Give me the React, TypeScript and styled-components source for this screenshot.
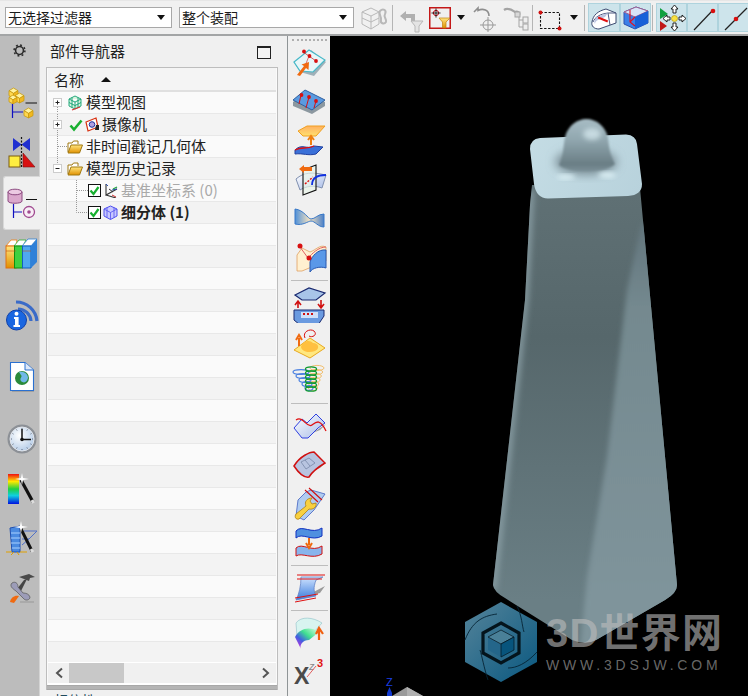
import React from "react";
import styled, { createGlobalStyle } from "styled-components";

const Global = createGlobalStyle`
  html, body { margin: 0; padding: 0; width: 748px; height: 696px; overflow: hidden; background: #f0f0f0; }
  body { font-family: "Noto Sans CJK SC", "Liberation Sans", sans-serif; color: #222; }
  * { box-sizing: border-box; }
`;

const Page = styled.div`width:748px;height:696px;display:flex;flex-direction:column;overflow:hidden;`;
const TopBar = styled.div`height:36px;flex:none;display:flex;align-items:center;padding:0 0 0 5px;background:#f0f0f0;border-top:1px solid #e6e6e6;border-bottom:2px solid #a3a5a6;`;
const Select = styled.div<{ $w: number; $ml?: number }>`
  width:${p => p.$w}px;height:21px;margin-left:${p => p.$ml ?? 0}px;flex:none;display:flex;align-items:center;justify-content:space-between;
  padding:0 6px 0 2px;background:#fff;border:1px solid #a8a8a8;font-size:14px;line-height:19px;color:#1c1c1c;
`;
const Caret = styled.span`width:0;height:0;border-left:4.5px solid transparent;border-right:4.5px solid transparent;border-top:5px solid #111;flex:none;`;
const BarSlot = styled.div<{ $w: number; $ml?: number }>`width:${p => p.$w}px;margin-left:${p => p.$ml ?? 0}px;height:30px;flex:none;display:flex;align-items:center;justify-content:center;`;
const BarSep = styled.div<{ $ml?: number }>`width:1px;height:26px;margin-left:${p => p.$ml ?? 0}px;background:#b5b5b5;flex:none;`;
const Pressed = styled.div<{ $w: number; $ml?: number }>`width:${p => p.$w}px;margin-left:${p => p.$ml ?? 0}px;height:29px;flex:none;display:flex;align-items:center;justify-content:center;background:#cde4eb;border:1px solid #aed3dd;`;
const Main = styled.div`flex:1;display:flex;min-height:0;`;
const Rail = styled.div`width:40px;flex:none;background:#bcbcbc;display:flex;flex-direction:column;border-right:1px solid #d4d4d4;`;
const RailSlot = styled.div<{ $mt?: number; $h?: number }>`height:${p => p.$h ?? 40}px;margin-top:${p => p.$mt ?? 0}px;flex:none;display:flex;align-items:center;justify-content:center;`;
const RailActive = styled.div`height:54px;width:37px;margin:6px 0 0 3px;flex:none;display:flex;align-items:center;justify-content:center;background:#f0f0f0;border:1px solid #d8d8d8;border-right:none;border-radius:3px 0 0 3px;`;
const Panel = styled.div`width:248px;flex:none;display:flex;flex-direction:column;background:#f0f0f0;border-right:1px solid #8f9496;`;
const PanelHead = styled.div`height:31px;flex:none;display:flex;align-items:center;justify-content:space-between;padding:2px 16px 0 10px;`;
const PanelTitle = styled.span`font-size:15px;line-height:20px;padding-bottom:3px;color:#222;`;
const MaxBox = styled.div`width:14px;height:13px;border:1px solid #222;border-top-width:2px;background:#f4f4f4;`;
const Tree = styled.div`margin:0 0 0 6px;width:232px;height:623px;flex:none;display:flex;flex-direction:column;border:1px solid #bdbdbd;border-bottom:none;background:#fafafa;padding:0 1px;overflow:hidden;`;
const TreeHeader = styled.div`height:24px;flex:none;display:flex;align-items:center;gap:16px;padding-left:6px;font-size:15px;background:#f4f4f4;border-bottom:2px solid #e0e0e0;`;
const SortArrow = styled.span`width:0;height:0;border-left:5.5px solid transparent;border-right:5.5px solid transparent;border-bottom:5px solid #111;margin-left:1px;`;
const Rows = styled.div`flex:1;min-height:0;overflow:hidden;display:flex;flex-direction:column;`;
const Row = styled.div<{ $alt: boolean }>`height:22px;flex:none;display:flex;align-items:center;background:${p => p.$alt ? "#f3f3f3" : "#fafafa"};border-bottom:1px solid #e8e8e8;`;
const RowLabel = styled.span<{ $dim?: boolean; $bold?: boolean; $ml?: number }>`
  margin-left:${p => p.$ml ?? 3}px;font-size:15px;line-height:20px;padding-bottom:2px;white-space:nowrap;
  color:${p => p.$dim ? "#a9a9a9" : "#222"};font-weight:${p => p.$bold ? 700 : 400};
`;
const ScrollBar = styled.div`height:21px;flex:none;display:flex;align-items:center;background:#f0f0f0;border-top:1px solid #fff;`;
const ScrollBtn = styled.div`width:21px;height:100%;flex:none;display:flex;align-items:center;justify-content:center;`;
const Thumb = styled.div`width:55px;height:100%;background:#c8c8c8;flex:none;`;
const ScrollFill = styled.div`flex:1;`;
const TreeEnd = styled.div`height:2px;flex:none;background:#fff;`;
const TreeBand = styled.div`height:5px;flex:none;margin:0 -1px;background:#b4b4b4;border-top:1px solid #a8a8a8;border-bottom:1px solid #a8a8a8;`;
const PanelFoot = styled.div`height:6px;flex:none;overflow:hidden;padding-left:14px;font-size:14px;line-height:20px;color:#1f4a5c;`;
const Tools = styled.div`width:42px;flex:none;display:flex;flex-direction:column;background:#f0f0f0;padding-left:1px;`;
const Grip = styled.div`height:6px;margin:3px 3px 1px 3px;flex:none;border-top:2px dotted #b0b0b0;`;
const ToolSlot = styled.div<{ $mt?: number }>`height:36px;margin-top:${p => p.$mt ?? 0}px;flex:none;display:flex;align-items:center;justify-content:center;`;
const ToolSep = styled.div<{ $mt?: number }>`height:1px;margin:${p => p.$mt ?? 0}px 2px 0 2px;flex:none;background:#bdbdbd;`;
const Viewport = styled.div`flex:1;position:relative;background:#000;overflow:hidden;`;
const Scene = styled.svg`display:block;width:418px;height:660px;`;
const Watermark = styled.div`position:absolute;left:216px;top:574px;display:flex;flex-direction:column;`;
const MarkTitle = styled.div`font-family:"Liberation Sans","Noto Sans CJK SC",sans-serif;font-weight:700;font-size:40px;line-height:46px;letter-spacing:1.2px;color:rgba(190,190,190,.6);white-space:nowrap;`;
const MarkSub = styled.div`font-family:"Liberation Sans",sans-serif;font-size:14px;line-height:14px;letter-spacing:3.8px;margin-top:2px;color:rgba(170,170,170,.62);white-space:nowrap;`;
const HiddenDefs = styled.svg`position:absolute;width:0;height:0;`;
const IconSvg = styled.svg`display:block;flex:none;`;

const Grad = () => (
  <HiddenDefs>
    <defs>
      <linearGradient id="gy" x1="0" y1="0" x2="1" y2="1"><stop offset="0" stopColor="#fff3a0" /><stop offset="1" stopColor="#e8a800" /></linearGradient>
      <linearGradient id="gb" x1="0" y1="0" x2="0" y2="1"><stop offset="0" stopColor="#cfe3ff" /><stop offset="1" stopColor="#3a7bdc" /></linearGradient>
      <linearGradient id="gbo" x1="0" y1="0" x2="1" y2="0"><stop offset="0" stopColor="#4f90d8" /><stop offset=".5" stopColor="#f4e2c0" /><stop offset="1" stopColor="#4a80c8" /></linearGradient>
      <linearGradient id="gs" x1="0" y1="0" x2="0" y2="1"><stop offset="0" stopColor="#f01010" /><stop offset=".25" stopColor="#ffe800" /><stop offset=".5" stopColor="#20d040" /><stop offset=".72" stopColor="#10d0e0" /><stop offset="1" stopColor="#0010e0" /></linearGradient>
      <linearGradient id="gr" x1="0" y1="1" x2="1" y2="0"><stop offset="0" stopColor="#ff20e0" /><stop offset=".35" stopColor="#4060e0" /><stop offset=".6" stopColor="#40e090" /><stop offset="1" stopColor="#e0ffe0" /></linearGradient>
      <linearGradient id="gw" x1="0" y1="0" x2="1" y2="1"><stop offset="0" stopColor="#fff" /><stop offset="1" stopColor="#a8bce8" /></linearGradient>
      <linearGradient id="gf" x1="0" y1="0" x2="0" y2="1"><stop offset="0" stopColor="#ffe680" /><stop offset="1" stopColor="#e09000" /></linearGradient>
      <radialGradient id="gc" cx=".4" cy=".35" r=".7"><stop offset="0" stopColor="#fff" /><stop offset="1" stopColor="#b4cce8" /></radialGradient>
      <linearGradient id="gg" x1="0" y1="0" x2="0" y2="1"><stop offset="0" stopColor="#ffb060" /><stop offset="1" stopColor="#ffe070" /></linearGradient>
    </defs>
  </HiddenDefs>
);

type V = { vb: string; w: number; h: number; children: React.ReactNode };
const Ico = ({ vb, w, h, children }: V) => <IconSvg width={w} height={h} viewBox={vb}>{children}</IconSvg>;

const Cube = ({ x, y, s }: { x: number; y: number; s: number }) => (
  <g stroke="#c89a10" strokeWidth=".8">
    <path d={`M${x},${y + s * .3} L${x + s * .5},${y} L${x + s},${y + s * .3} L${x + s * .5},${y + s * .6} Z`} fill="#fff3a0" />
    <path d={`M${x},${y + s * .3} L${x + s * .5},${y + s * .6} V${y + s * 1.1} L${x},${y + s * .85} Z`} fill="#ffd850" />
    <path d={`M${x + s},${y + s * .3} L${x + s * .5},${y + s * .6} V${y + s * 1.1} L${x + s},${y + s * .85} Z`} fill="#f2b820" />
  </g>
);

/* ---- left rail ---- */
const RailGear = () => (
  <Ico vb="0 0 16 16" w={15} h={15}>
    <circle cx="8" cy="8" r="4.2" fill="none" stroke="#2a2a2a" strokeWidth="1.7" />
    <circle cx="8" cy="8" r="5.8" fill="none" stroke="#2a2a2a" strokeWidth="1.6" strokeDasharray="2 2.55" />
  </Ico>
);
const RailAssembly = () => (
  <Ico vb="0 82 40 40" w={40} h={40}>
    <Cube x={9} y={88} s={9} /><Cube x={15} y={93} s={9} /><Cube x={9} y={95} s={8} />
    <path d="M25.5,103H37" stroke="#111" strokeWidth="1" />
    <path d="M12.5,104V118M12.5,112H23" stroke="#1010c0" strokeWidth="1.2" fill="none" />
    <Cube x={24} y={108} s={9} />
  </Ico>
);
const RailConstraint = () => (
  <Ico vb="0 130 40 40" w={40} h={40}>
    <path d="M13,138L30,151V138L13,151Z" fill="#1f2fd0" />
    <rect x="9" y="156" width="11" height="11" fill="#ffee40" stroke="#7a5a10" />
    <path d="M23,153V167H35Z" fill="#d81010" stroke="#801010" strokeWidth=".6" />
    <path d="M21.5,137V168" stroke="#111" strokeWidth="1.2" strokeDasharray="2 1.5" />
  </Ico>
);
const RailPart = () => (
  <Ico vb="3 183 37 40" w={37} h={40}>
    <path d="M7,192V201C7,204 21,204 21,201V192Z" fill="#dba8cc" stroke="#8c4a80" />
    <ellipse cx="14" cy="192" rx="7" ry="2.8" fill="#eccae2" stroke="#8c4a80" />
    <path d="M25,199.5H36" stroke="#111" strokeWidth="1" />
    <path d="M12.5,204V218M12.5,212H21" stroke="#1010c0" strokeWidth="1.2" fill="none" />
    <circle cx="28" cy="212" r="5.5" fill="#f8eef6" stroke="#a04a90" strokeWidth="1.3" />
    <circle cx="28" cy="212" r="1.8" fill="#a04a90" />
  </Ico>
);
const RailBooks = () => (
  <Ico vb="0 234 40 40" w={40} h={40}>
    <path d="M6,246L11,240H17L16,246Z" fill="#fff" stroke="#f08010" strokeWidth=".8" />
    <rect x="6" y="246" width="10" height="22" fill="url(#gf)" stroke="#e07010" />
    <path d="M14,246L19,240H26L23,246Z" fill="#fff" stroke="#30b030" strokeWidth=".8" />
    <rect x="14.5" y="246" width="8" height="22" fill="#40d040" stroke="#109010" />
    <path d="M22,246L28,239H37L31,246Z" fill="#fff" stroke="#3080d0" strokeWidth=".8" />
    <path d="M22.5,246H31V268H22.5Z" fill="#50a8f0" stroke="#1060c0" />
    <path d="M31,246L37,239V262L31,268Z" fill="#2f80d8" />
    <path d="M6,251H16M22.5,251H31" stroke="#c05010" strokeWidth=".6" />
  </Ico>
);
const RailInfo = () => (
  <Ico vb="0 297 40 40" w={40} h={40}>
    <path d="M16,302A21,21 0 0 1 37,321" fill="none" stroke="#3a6bc8" strokeWidth="3.2" />
    <path d="M18,309A13,13 0 0 1 31,321" fill="none" stroke="#3a6bc8" strokeWidth="3.2" />
    <circle cx="16.5" cy="320" r="10" fill="#1a66e0" stroke="#1040a8" />
    <circle cx="16.5" cy="313.8" r="2" fill="#fff" />
    <path d="M14,317H18.6V325H20V327H13.5V325H15V319H14Z" fill="#fff" />
  </Ico>
);
const RailDoc = () => (
  <Ico vb="0 357 40 40" w={40} h={40}>
    <path d="M12,364H25L34,372V392H12Z" fill="#a0a0a0" />
    <path d="M10.5,362.5H25L33.5,370V390.5H10.5Z" fill="#fff" stroke="#2a70d0" strokeWidth="1.1" />
    <path d="M25,362.5V370H33.5" fill="#dde8f8" stroke="#2a70d0" />
    <circle cx="22" cy="378" r="7" fill="#2a8a3a" />
    <path d="M19,372C24,371 28,374 28,378C27,382 24,384 21,381C19,378 23,377 21,375Z" fill="#70b8e8" />
  </Ico>
);
const RailClock = () => (
  <Ico vb="0 419 40 40" w={40} h={40}>
    <circle cx="22" cy="439" r="14.5" fill="#8c9096" />
    <circle cx="22" cy="439" r="12" fill="url(#gc)" stroke="#e0e4ea" />
    <path d="M22,429V439.5H31" stroke="#111" strokeWidth="1.5" fill="none" />
    <circle cx="22" cy="439.5" r="1.8" fill="#111" />
    <path d="M22,428v1M33,439h-1M22,450v-1M11,439h1M27.5,429.5l-.6,1M31.5,433.5l-1,.6M31.5,444.5l-1,-.6M27.5,448.5l-.6,-1M16.5,448.5l.6,-1M12.5,444.5l1,-.6M12.5,433.5l1,.6M16.5,429.5l.6,1" stroke="#4a5060" strokeWidth=".8" />
  </Ico>
);
const Sparkle = ({ x, y }: { x: number; y: number }) => (
  <path d={`M${x - 7},${y}L${x - 1},${y - 1}L${x},${y - 6}L${x + 1},${y - 1}L${x + 7},${y}L${x + 1},${y + 1}L${x},${y + 6}L${x - 1},${y + 1}Z`} fill="#fff" />
);
const RailSpectrum = () => (
  <Ico vb="0 468 40 40" w={40} h={40}>
    <rect x="8" y="474" width="11" height="30" fill="url(#gs)" />
    <path d="M21,480L33,502" stroke="#111" strokeWidth="3.2" />
    <path d="M32,500L33.5,503" stroke="#ddd" strokeWidth="3" />
    <Sparkle x={22} y={479} />
  </Ico>
);
const RailWand = () => (
  <Ico vb="0 520 40 40" w={40} h={40}>
    <path d="M10,528L20,526V552H12Z" fill="#4a8ae0" stroke="#2050b0" />
    <path d="M11,533H20M11,538H20M11,543H20M12,548H20" stroke="#a8d0ff" />
    <path d="M24,531H37L29,539H22M22,545L29,539" stroke="#5070c8" fill="none" />
    <path d="M6,552H12M20,552H27M11,555L14,552M19,555L17,552" stroke="#e0a000" />
    <path d="M21,529L32,551" stroke="#111" strokeWidth="3" />
    <path d="M31,549L33,552" stroke="#ddd" strokeWidth="3" />
    <Sparkle x={21} y={527} />
  </Ico>
);
const RailTools = () => (
  <Ico vb="0 568 40 40" w={40} h={40}>
    <path d="M19,577L29,574L35,577L30,578L29,581Z" fill="#4a4a4a" />
    <path d="M24,580L27,579L21,591L17,589Z" fill="#444" />
    <path d="M12,583C9,586 13,589 16,591L24,599C26,601 30,600 30,597C29,594 26,593 23,593L18,587C18,583 15,581 12,583Z" fill="#9c9cb8" stroke="#555" strokeWidth=".7" />
    <path d="M10,602C11,597 15,595 19,596L14,603Z" fill="#f06a10" />
    <path d="M20,602H34" stroke="#aaa" strokeWidth="2" />
  </Ico>
);

/* ---- vertical toolbar ---- */
const T = ({ c, children }: { c: number; children: React.ReactNode }) => <Ico vb={`290 ${c - 18} 40 36`} w={40} h={36}>{children}</Ico>;
const ToolCurve = () => (
  <T c={64}>
    <path d="M295,64L311,50L326,62L314,76L300,72Z" fill="#9fb0b8" />
    <path d="M294,62L309,50L325,60L313,72L300,71Z" fill="#e8f6f8" stroke="#46b8c8" strokeWidth="1.2" />
    <path d="M303,52L309,56L316,61M309,56L305,66" stroke="#d01010" strokeWidth=".6" />
    <circle cx="304" cy="51.5" r="1.9" fill="#d81010" /><circle cx="309.5" cy="56" r="1.9" fill="#d81010" /><circle cx="316" cy="61" r="1.9" fill="#d81010" />
    <path d="M297,75L304,66L301.5,64.5L309,62L308.5,70L306,68L300,76Z" fill="#f06a10" />
  </T>
);
const ToolPlate = () => (
  <T c={100}>
    <path d="M293,102L305,92L325,102V106L312,114L293,106Z" fill="#8c98a0" />
    <path d="M293,100L305,90L325,100L312,110Z" fill="#5a9ae0" stroke="#3060a0" />
    <path d="M301,95L299,104M309,97L306,108M316,101L314,108" stroke="#d81010" />
    <circle cx="301.5" cy="95" r="1.9" fill="#d81010" /><circle cx="309" cy="97" r="1.9" fill="#d81010" /><circle cx="316" cy="101" r="1.9" fill="#d81010" />
  </T>
);
const ToolOffset = () => (
  <T c={141}>
    <path d="M298,131L307,126H325L316,136H303Z" fill="url(#gg)" stroke="#f0a020" />
    <path d="M311,137V145M308,140L311,136L314,140" stroke="#f08010" strokeWidth="2" fill="none" />
    <path d="M295,150C302,143 306,150 314,146L323,147L316,154C308,156 303,153 295,154Z" fill="#3a70d8" stroke="#2040a0" />
    <path d="M295,150C302,146 306,150 314,146" stroke="#e01010" strokeWidth="1.3" fill="none" />
  </T>
);
const ToolSection = () => (
  <T c={180}>
    <path d="M296,179C304,172 312,172 326,175L322,188C314,185 306,186 300,190Z" fill="url(#gw)" stroke="#8090b0" />
    <path d="M303,170L316,165V190L303,195Z" fill="#e8f4e8" fillOpacity=".7" stroke="#111" strokeWidth="1.1" />
    <path d="M312,185C312,178 318,175 326,175" stroke="#1030e0" strokeWidth="1.8" fill="none" />
    <path d="M305,184L313,177" stroke="#e01010" strokeWidth="1.5" strokeDasharray="2 1.4" />
    <path d="M299,169L304,165V167H312V171H304V173Z" fill="#f06a10" />
  </T>
);
const ToolBow = () => (
  <T c={217}>
    <path d="M295,209C304,210 308,219 311,219C315,219 318,214 324,214V227C318,227 315,221 311,221C308,221 303,226 295,224Z" fill="url(#gbo)" stroke="#3878c8" />
  </T>
);
const ToolSweep = () => (
  <T c={258}>
    <path d="M297,255L302,248L310,252C316,250 320,244 326,247V261L302,271H297Z" fill="#fff0d0" stroke="#e0a060" strokeWidth=".8" />
    <path d="M310,262C312,256 318,249 326,250V268C320,266 312,268 310,272Z" fill="#5a98e8" stroke="#2858b0" />
    <path d="M300,247L308,258C312,254 318,247 326,247" stroke="#e06060" fill="none" />
    <circle cx="300" cy="246" r="2.5" fill="#d81010" /><circle cx="309" cy="258" r="2.5" fill="#d81010" />
  </T>
);
const ToolMold = () => (
  <T c={305}>
    <path d="M295,295L309,288L325,293L316,300H302Z" fill="#a8c4e8" stroke="#1a2a70" strokeWidth="1.2" />
    <path d="M294,310H324V316L318,325H300L294,320Z" fill="#6a9ae0" stroke="#1a2a70" />
    <path d="M301,312H318V318H301Z" fill="#cfe0f8" />
    <path d="M298,308V302M295,305L298,301L301,305M321,300V307M318,304L321,308L324,304" stroke="#d01010" strokeWidth="1.6" fill="none" />
    <path d="M303,313h2v2h-2zM307,313h2v2h-2zM311,313h2v2h-2z" fill="#d01010" />
  </T>
);
const ToolBlob = () => (
  <T c={343}>
    <path d="M294,350L310,338L325,348L310,358Z" fill="#ffe880" stroke="#e8a820" />
    <path d="M301,347C302,341 310,339 313,343C319,343 320,349 315,351C309,353 302,352 301,347Z" fill="#ffc040" />
    <path d="M305,338C302,332 310,328 314,331C318,335 312,338 309,336" stroke="#d81010" fill="none" />
    <path d="M299,346V338M296,340L299,335L302,340" stroke="#f06a10" strokeWidth="2" fill="none" />
  </T>
);
const ToolCoil = () => (
  <T c={381}>
    {[0, 1, 2, 3, 4, 5].map(i => <ellipse key={i} cx={317 - i * .8} cy={368 + i * 4} rx={7 - i * .5} ry={2.6} fill="none" stroke="#f0c070" />)}
    {[0, 1, 2, 3, 4].map(i => <ellipse key={i} cx={301 + i * 2} cy={372 + i * 4} rx={8 - i} ry={2.4} fill="none" stroke="#4a80e0" strokeWidth="1.2" />)}
    {[0, 1, 2, 3, 4, 5].map(i => <ellipse key={i} cx={311} cy={369 + i * 4} rx={5.5} ry={2.2} fill="none" stroke="#109a30" strokeWidth="1.3" />)}
  </T>
);
const ToolFold = () => (
  <T c={427}>
    <path d="M300,438L320,430L326,424L308,436Z" fill="#9a9a9a" />
    <path d="M294,428L302,419L307,423L316,414L325,423L318,428L308,438L302,438Z" fill="url(#gw)" stroke="#3040e0" />
    <path d="M296,420C303,415 307,429 312,425C316,422 320,418 326,431" stroke="#e01010" strokeWidth="1.3" fill="none" />
  </T>
);
const ToolPatch = () => (
  <T c={465}>
    <path d="M300,476L320,468L326,462L308,474Z" fill="#9a9a9a" />
    <path d="M294,466C300,456 310,452 314,452L325,463C320,466 312,472 309,477C304,478 298,472 294,466Z" fill="#b8c4e0" stroke="#d01010" strokeWidth="1.5" />
    <path d="M301,462L309,458L315,463L306,469ZM305,460L310,466" stroke="#7080a0" strokeWidth=".7" fill="none" />
  </T>
);
const ToolWrench = () => (
  <T c={505}>
    <path d="M298,500L306,492L311,490L325,494L314,510L304,520L296,516Z" fill="#b0ccf0" stroke="#4060c0" strokeWidth=".8" />
    <path d="M305,490L318,502M309,488L322,500" stroke="#d01010" strokeWidth="1.1" />
    <path d="M296,514L306,506C304,502 307,498 312,498L310,501L312,504L316,503C317,507 313,510 309,509L299,519C296,520 294,517 296,514Z" fill="#f8d040" stroke="#b08010" strokeWidth=".8" />
  </T>
);
const ToolBlend = () => (
  <T c={543}>
    <path d="M296,531C302,524 312,535 322,528V536C312,542 302,532 296,538Z" fill="#5090e0" stroke="#1030c0" />
    <path d="M296,548C302,542 312,553 322,546V554C312,560 302,552 296,556Z" fill="#88b4ec" stroke="#d01010" />
    <path d="M309,538V545M306,543L309,548L312,543" stroke="#f06a10" strokeWidth="2" fill="none" />
  </T>
);
const ToolRuled = () => (
  <T c={588}>
    <path d="M300,598L320,593L325,586L306,596Z" fill="#9a9a9a" />
    <path d="M301,577L323,577L316,580C313,588 314,592 316,596L296,600C299,594 301,586 301,577Z" fill="url(#gb)" stroke="#5878c0" strokeWidth=".7" />
    <path d="M297,575L325,575M297,579L322,579M295,598L318,594M295,602L316,598" stroke="#e01010" />
  </T>
);
const ToolColor = () => (
  <T c={632}>
    <path d="M296,623C301,616 313,617 322,623L314,632C308,628 303,630 297,637Z" fill="#d8f4f0" stroke="#90c0c8" strokeWidth=".6" />
    <path d="M295,637C300,628 310,626 319,632L309,640C303,640 299,645 301,649Z" fill="url(#gr)" />
    <path d="M319,640V630M316,634L319,628L323,634" stroke="#f06010" strokeWidth="2.2" fill="none" />
  </T>
);
const ToolExpr = () => (
  <T c={672}>
    <text x="294" y="684" fontFamily="Liberation Sans" fontWeight="700" fontSize="23" fill="#4a4a4a">X</text>
    <text x="309" y="670" fontFamily="Liberation Sans" fontStyle="italic" fontSize="11" fill="#888">z</text>
    <text x="317" y="667" fontFamily="Liberation Sans" fontWeight="700" fontSize="11" fill="#e01010">3</text>
    <path d="M307,677L316,666" stroke="#e06060" />
  </T>
);

/* ---- top bar icons ---- */
const GRAY = "#b8b8b8";
const BarAssembly = () => (
  <Ico vb="0 0 36 30" w={36} h={30}>
    <path d="M6,9L15,5L23,9V21L15,26L6,21Z M6,9L15,13L23,9M15,13V26M6,15L15,19L23,15" fill="#f0f0f0" stroke={GRAY} />
    <path d="M24,8C27,5 31,7 29,11C27,14 31,16 30,19C28,22 24,20 25,17C26,14 22,11 24,8Z" fill="none" stroke={GRAY} strokeWidth="2" />
  </Ico>
);
const BarUndoFilter = () => (
  <Ico vb="0 0 36 30" w={36} h={30}>
    <path d="M7,13L13,8V11H22V19H18V15H13V18Z" fill="#b0b0b0" />
    <path d="M18,18H30L26,23V29H22V23Z" fill="#e4e4e4" stroke={GRAY} />
  </Ico>
);
const BarFilter = () => (
  <Ico vb="0 0 22 22" w={22} h={22}>
    <rect x=".75" y=".75" width="20.5" height="20.5" fill="none" stroke="#c41818" strokeWidth="1.5" />
    <path d="M10,11H21L17,15V21H13.5V15Z" fill="url(#gf)" stroke="#c08010" strokeWidth=".7" />
    <circle cx="7" cy="6" r="2.6" fill="none" stroke="#c00010" />
    <path d="M7,1.5V10.5M2.5,6H11.5" stroke="#111" strokeWidth=".9" />
  </Ico>
);
const BarUndoTarget = () => (
  <Ico vb="0 0 30 30" w={30} h={30}>
    <path d="M3,9L7,5V7.5C12,5 18,7 18,13" fill="none" stroke="#8e8e8e" strokeWidth="1.6" />
    <circle cx="17" cy="22" r="5" fill="none" stroke="#999" />
    <path d="M17,14V29M9,22H25" stroke="#999" />
  </Ico>
);
const BarTree = () => (
  <Ico vb="0 0 32 30" w={32} h={30}>
    <path d="M4,7C8,4 12,7 15,9C18,8 20,10 19,12" fill="none" stroke="#a4a4a4" strokeWidth="2.2" />
    <path d="M19,13V24M19,17H23M19,24H23" stroke="#a4a4a4" fill="none" />
    <rect x="15" y="9" width="5" height="5" fill="#d8d8d8" stroke="#a4a4a4" />
    <rect x="23" y="14" width="5" height="6" fill="#eee" stroke="#a4a4a4" />
    <rect x="23" y="21" width="5" height="6" fill="#eee" stroke="#a4a4a4" />
  </Ico>
);
const BarBox = () => (
  <Ico vb="0 0 36 30" w={36} h={30}>
    <rect x="7.5" y="9.5" width="19" height="16" fill="none" stroke="#111" strokeWidth="1.1" strokeDasharray="2.4 1.6" />
    <circle cx="7.5" cy="9.5" r="2" fill="#d01010" /><circle cx="26.5" cy="25.5" r="2" fill="#d01010" />
  </Ico>
);
const BarCurveSolid = () => (
  <Ico vb="0 0 30 27" w={30} h={27}>
    <path d="M3,18C4,11 9,7 17,5L27,9V19L10,25C5,25 2,22 3,18Z" fill="#fff" stroke="#3c4a70" />
    <path d="M4,18C6,13 11,10 19,9L27,9M19,9L21,21" fill="none" stroke="#4a5880" />
    <path d="M6,20C4,17 7,13 10,12L19,9L16,13L9,16C7,17 6,18 6,20Z" fill="#bcc4e0" />
    <path d="M9,14L19,17" stroke="#e01010" strokeWidth="2" transform="rotate(6 14 15)" />
  </Ico>
);
const BarSolid = () => (
  <Ico vb="0 0 30 27" w={30} h={27}>
    <path d="M3,8L15,3L27,7V19L14,25L3,20Z" fill="#3a80e8" stroke="#2a50b0" />
    <path d="M3,8L15,3L27,7L14,13Z" fill="#d8e4f8" stroke="#a06090" />
    <path d="M14,13V25L27,19V7Z" fill="#1860d8" />
    <path d="M9,6V18L14,22M14,13L9,18" stroke="#e01020" strokeWidth="1.1" fill="none" />
  </Ico>
);
const BarPlay = () => (
  <Ico vb="0 0 30 27" w={30} h={27}>
    <path d="M3,4L11,10L3,15Z" fill="#10a040" /><path d="M3,17L10,22L3,27Z" fill="#c01818" />
    <circle cx="17.5" cy="14.5" r="3" fill="#f8e040" stroke="#b09000" strokeWidth=".6" />
    <path d="M17.5,1L21,5H19V9H16V5H14ZM17.5,27L21,23H19V19H16V23H14ZM6,14.5L10,11V13H13V16H10V18ZM29,14.5L25,11V13H22V16H25V18Z" fill="#fff" stroke="#111" strokeWidth=".9" />
  </Ico>
);
const BarLine = ({ mid }: { mid?: boolean }) => (
  <Ico vb="0 0 30 27" w={30} h={27}>
    <path d={mid ? "M6,26L28,4" : "M6,26L25,6"} stroke="#222" strokeWidth="1.2" />
    <circle cx={mid ? 17 : 25} cy={mid ? 15 : 7} r="2.3" fill="#d81010" />
  </Ico>
);

/* ---- tree icons ---- */
const Dot = "#999";
type GK = "first" | "mid" | "leaf" | "last" | "child" | "childLast";
const Gutter = ({ kind }: { kind: GK }) => {
  const box = kind === "first" || kind === "mid" || kind === "last";
  const w = kind === "child" || kind === "childLast" ? 40 : 19;
  return (
    <IconSvg width={w} height={21}>
      <g stroke={Dot} strokeDasharray="1 1" fill="none">
        {(kind === "first" || kind === "mid" || kind === "leaf") && <path d={`M9.5,${kind === "first" ? 11 : 0}V21`} />}
        {(kind === "mid" || kind === "leaf" || kind === "last") && <path d="M9.5,0V11" />}
        {kind === "leaf" && <path d="M10,10.5H19" />}
        {kind === "child" && <path d="M28.5,0V21M29,10.5H40" />}
        {kind === "childLast" && <path d="M28.5,0V10.5H40" />}
      </g>
      {box && (
        <g>
          <rect x="5.5" y="6.5" width="8" height="8" fill="#fff" stroke="#ccc" />
          <path d={kind === "last" ? "M7.5,10.5H11.5" : "M7.5,10.5H11.5M9.5,8.5V12.5"} stroke="#222" />
        </g>
      )}
    </IconSvg>
  );
};
const TreeViews = () => (
  <Ico vb="0 0 16 16" w={16} h={16}>
    <path d="M8,1L14,4V11L8,14L2,11V4Z M2,4L8,7L14,4M8,7V14M5,2.5V12.5M11,2.5V12.5M2,7.5L8,10.5L14,7.5" fill="#d8f4e0" stroke="#10a070" strokeWidth=".9" />
    <path d="M5,15L13,12" stroke="#e03030" strokeWidth="1.2" />
  </Ico>
);
const GreenCheck = () => (
  <Ico vb="-2 0 17 14" w={17} h={14}>
    <path d="M1.5,7.5L5,11.5L12.5,2.5" fill="none" stroke="#18b030" strokeWidth="2.6" />
  </Ico>
);
const TreeCam = () => (
  <Ico vb="0 0 16 16" w={16} h={16}>
    <path d="M2,5L12,1L14,10L4,14Z" fill="#fff" stroke="#d83010" strokeWidth="1.2" />
    <circle cx="8" cy="7.5" r="2.8" fill="#b0a0e0" stroke="#2030a0" />
    <path d="M12,8H15V13H11Z" fill="#222" />
  </Ico>
);
const Folder = () => (
  <Ico vb="0 0 16 14" w={16} h={14}>
    <path d="M1,12V3H5L6.5,1H11V4" fill="#fff" stroke="#a07810" />
    <path d="M1,13L4,5H15.5L12.5,13Z" fill="url(#gf)" stroke="#a07810" />
  </Ico>
);
const Checkbox = () => (
  <Ico vb="0 0 13 13" w={13} h={13}>
    <rect x=".5" y=".5" width="12" height="12" fill="#fff" stroke="#111" />
    <path d="M2.5,6.5L5.5,10L10.5,3" fill="none" stroke="#18b030" strokeWidth="2.2" />
  </Ico>
);
const TreeCsys = () => (
  <Ico vb="-2 0 17 15" w={17} h={15}>
    <path d="M3,1V12L14,6M3,12L13,15" fill="none" stroke="#333" strokeWidth="1.1" />
    <path d="M6,6L10,9" stroke="#333" />
    <path d="M3,1L5,3M9,7L14,6" stroke="#2a50b0" />
    <path d="M9,12L13,14" stroke="#d03030" />
    <path d="M10,6L14,4" stroke="#20a040" strokeWidth="1.3" />
  </Ico>
);
const TreeBody = () => (
  <Ico vb="-2 0 17 15" w={17} h={15}>
    <path d="M7.5,1L14,4V11L7.5,14.5L1,11V4Z" fill="#c8c8ff" stroke="#5050f0" />
    <path d="M1,4L7.5,7.5L14,4M7.5,7.5V14.5M4,2.5V12.5M11,2.5V12.5" fill="none" stroke="#5050f0" strokeWidth=".8" />
  </Ico>
);
const Chevron = ({ right }: { right?: boolean }) => (
  <Ico vb="0 0 10 12" w={10} h={12}>
    <path d={right ? "M2,1.5L7,6L2,10.5" : "M8,1.5L3,6L8,10.5"} fill="none" stroke="#555" strokeWidth="2" />
  </Ico>
);

/* ---- 3D model ---- */
const Model = () => (
  <Scene viewBox="330 36 418 660">
    <defs>
      <linearGradient id="mb" gradientUnits="userSpaceOnUse" x1="0" y1="195" x2="0" y2="600"><stop offset="0" stopColor="#5f7074" /><stop offset=".35" stopColor="#56676b" /><stop offset="1" stopColor="#6a7f85" /></linearGradient>
      <linearGradient id="mr" gradientUnits="userSpaceOnUse" x1="0" y1="210" x2="0" y2="600"><stop offset="0" stopColor="#60727a" /><stop offset=".25" stopColor="#74898f" /><stop offset="1" stopColor="#7f949b" /></linearGradient>
      <linearGradient id="mk" gradientUnits="userSpaceOnUse" x1="0" y1="119" x2="0" y2="172"><stop offset="0" stopColor="#a8bdc5" /><stop offset=".4" stopColor="#90a6ae" /><stop offset=".85" stopColor="#6a7e85" /><stop offset="1" stopColor="#7c9199" /></linearGradient>
      <linearGradient id="mp" gradientUnits="userSpaceOnUse" x1="530" y1="140" x2="640" y2="195"><stop offset="0" stopColor="#c4dce4" /><stop offset="1" stopColor="#b8d2dc" /></linearGradient>
      <filter id="b1" x="-20%" y="-20%" width="140%" height="140%"><feGaussianBlur stdDeviation="1.2" /></filter>
      <filter id="b2" x="-30%" y="-30%" width="160%" height="160%"><feGaussianBlur stdDeviation="2.5" /></filter>
      <filter id="b3" x="-30%" y="-30%" width="160%" height="160%"><feGaussianBlur stdDeviation="3" /></filter>
      <filter id="b5" x="-30%" y="-30%" width="160%" height="160%"><feGaussianBlur stdDeviation="5" /></filter>
      <clipPath id="cb"><path d="M532,185L530,205L525,300L493,585Q494,592 505,598L572,640Q585,645 596,640L665,600Q677,593 677,585L640,188Z" /></clipPath>
      <clipPath id="cp"><path d="M540,138Q530,139 530,149L534,184Q536,198 548,198.5L628,196Q642,195 642,184L637,144Q636,135 626,134.5Z" /></clipPath>
      <linearGradient id="hx1" x1="0" y1="0" x2="1" y2="1"><stop offset="0" stopColor="#55849a" /><stop offset="1" stopColor="#0a5880" /></linearGradient>
    </defs>
    <g clipPath="url(#cb)">
      <rect x="480" y="180" width="210" height="470" fill="url(#mb)" />
      <path d="M531,190L525,300L493,590" stroke="#8a9fa5" strokeWidth="6" filter="url(#b3)" fill="none" />
      <path d="M641,225L627,290L607,457L587,577L580,650H690V200Z" fill="url(#mr)" filter="url(#b2)" />
    </g>
    <g clipPath="url(#cp)">
      <rect x="525" y="130" width="120" height="72" fill="url(#mp)" />
      <ellipse cx="586" cy="162" rx="31" ry="13" fill="#7b8f97" filter="url(#b5)" />
      <ellipse cx="566" cy="177" rx="9" ry="2.5" fill="#dcf0f5" filter="url(#b2)" />
      <ellipse cx="607" cy="175" rx="9" ry="3" fill="#dcf0f5" filter="url(#b2)" />
    </g>
    <path d="M559,165C564,156 563,146 565,137C568,125 578,119 586,119C597,119 606,127 608,138C609,147 610,156 615,164C605,173 570,174 559,165Z" fill="url(#mk)" filter="url(#b1)" />
    <ellipse cx="592" cy="134" rx="9" ry="6" fill="#cfe2e8" filter="url(#b2)" opacity=".85" />
    <path d="M392,696L407,687L423,696Z" fill="#9a9a9a" />
    <path d="M407,687L423,696H407Z" fill="#b0b0b0" />
    <text x="386" y="686" fontFamily="Liberation Sans" fontSize="11" fill="#1a3fe8">Z</text>
    <path d="M389.5,687L392,693V697H387V693Z" fill="#1038d0" />
    <g>
      <path d="M501,602L537,622V662L501,682L465,662V622Z" fill="url(#hx1)" />
      <path d="M465,640C472,622 482,616 497,614M517,606C522,616 522,626 524,632M537,652C526,664 516,668 508,668M488,680C484,668 482,656 480,650" fill="none" stroke="#062434" strokeWidth=".9" />
      <path d="M501,623L519,633V653L501,663L483,653V633Z" fill="none" stroke="#04141c" strokeWidth="3.2" />
      <path d="M501,630L514,637V650L501,657L488,650V637Z" fill="#24668a" />
      <path d="M501,630L514,637L501,644L488,637Z" fill="#4a8098" stroke="#04141c" strokeWidth=".7" />
      <path d="M501,644V657L514,650V637Z" fill="#07547c" stroke="#04141c" strokeWidth=".7" />
    </g>
  </Scene>
);

const App = () => (
  <Page>
    <Global />
    <Grad />
    <TopBar>
      <Select $w={167}>无选择过滤器<Caret /></Select>
      <Select $w={175} $ml={7}>整个装配<Caret /></Select>
      <BarSlot $w={36} $ml={2}><BarAssembly /></BarSlot>
      <BarSep />
      <BarSlot $w={36}><BarUndoFilter /></BarSlot>
      <BarFilter />
      <BarSlot $w={20}><Caret /></BarSlot>
      <BarSlot $w={29}><BarUndoTarget /></BarSlot>
      <BarSlot $w={32}><BarTree /></BarSlot>
      <BarSep />
      <BarSlot $w={36}><BarBox /></BarSlot>
      <BarSlot $w={10}><Caret /></BarSlot>
      <BarSep $ml={5} />
      <Pressed $w={32} $ml={3}><BarCurveSolid /></Pressed>
      <Pressed $w={31}><BarSolid /></Pressed>
      <BarSep $ml={1} />
      <Pressed $w={31} $ml={3}><BarPlay /></Pressed>
      <Pressed $w={31}><BarLine /></Pressed>
      <Pressed $w={31}><BarLine mid /></Pressed>
    </TopBar>
    <Main>
      <Rail>
        <RailSlot $h={28}><RailGear /></RailSlot>
        <RailSlot $mt={18}><RailAssembly /></RailSlot>
        <RailSlot $mt={8}><RailConstraint /></RailSlot>
        <RailActive><RailPart /></RailActive>
        <RailSlot $mt={4}><RailBooks /></RailSlot>
        <RailSlot $mt={23}><RailInfo /></RailSlot>
        <RailSlot $mt={20}><RailDoc /></RailSlot>
        <RailSlot $mt={22}><RailClock /></RailSlot>
        <RailSlot $mt={9}><RailSpectrum /></RailSlot>
        <RailSlot $mt={12}><RailWand /></RailSlot>
        <RailSlot $mt={8}><RailTools /></RailSlot>
      </Rail>
      <Panel>
        <PanelHead><PanelTitle>部件导航器</PanelTitle><MaxBox /></PanelHead>
        <Tree>
          <TreeHeader>名称<SortArrow /></TreeHeader>
          <Rows>
            <Row $alt={false}><Gutter kind="first" /><TreeViews /><RowLabel>模型视图</RowLabel></Row>
            <Row $alt><Gutter kind="mid" /><GreenCheck /><TreeCam /><RowLabel $ml={2}>摄像机</RowLabel></Row>
            <Row $alt={false}><Gutter kind="leaf" /><Folder /><RowLabel>非时间戳记几何体</RowLabel></Row>
            <Row $alt><Gutter kind="last" /><Folder /><RowLabel>模型历史记录</RowLabel></Row>
            <Row $alt={false}><Gutter kind="child" /><Checkbox /><TreeCsys /><RowLabel $dim>基准坐标系 (0)</RowLabel></Row>
            <Row $alt><Gutter kind="childLast" /><Checkbox /><TreeBody /><RowLabel $bold>细分体 (1)</RowLabel></Row>
            {Array.from({ length: 21 }, (_, i) => <Row key={i} $alt={i % 2 === 1} />)}
          </Rows>
          <ScrollBar>
            <ScrollBtn><Chevron /></ScrollBtn>
            <Thumb />
            <ScrollFill />
            <ScrollBtn><Chevron right /></ScrollBtn>
          </ScrollBar>
          <TreeEnd />
          <TreeBand />
        </Tree>
        <PanelFoot>相依性</PanelFoot>
      </Panel>
      <Tools>
        <Grip />
        <ToolSlot><ToolCurve /></ToolSlot>
        <ToolSlot><ToolPlate /></ToolSlot>
        <ToolSlot $mt={5}><ToolOffset /></ToolSlot>
        <ToolSlot $mt={3}><ToolSection /></ToolSlot>
        <ToolSlot $mt={1}><ToolBow /></ToolSlot>
        <ToolSlot $mt={5}><ToolSweep /></ToolSlot>
        <ToolSep $mt={4} />
        <ToolSlot $mt={6}><ToolMold /></ToolSlot>
        <ToolSlot $mt={2}><ToolBlob /></ToolSlot>
        <ToolSlot $mt={2}><ToolCoil /></ToolSlot>
        <ToolSep $mt={4} />
        <ToolSlot $mt={5}><ToolFold /></ToolSlot>
        <ToolSlot $mt={2}><ToolPatch /></ToolSlot>
        <ToolSlot $mt={4}><ToolWrench /></ToolSlot>
        <ToolSlot $mt={2}><ToolBlend /></ToolSlot>
        <ToolSep $mt={4} />
        <ToolSlot $mt={4}><ToolRuled /></ToolSlot>
        <ToolSep $mt={4} />
        <ToolSlot $mt={3}><ToolColor /></ToolSlot>
        <ToolSlot $mt={4}><ToolExpr /></ToolSlot>
      </Tools>
      <Viewport>
        <Model />
        <Watermark>
          <MarkTitle>3D世界网</MarkTitle>
          <MarkSub>WWW.3DSJW.COM</MarkSub>
        </Watermark>
      </Viewport>
    </Main>
  </Page>
);

export default App;
